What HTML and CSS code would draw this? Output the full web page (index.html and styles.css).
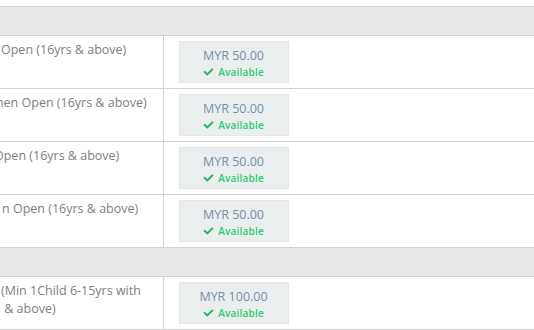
FILE: index.html
```html
<!DOCTYPE html>
<html lang="en">
<head>
    <meta charset="UTF-8">
    <meta name="viewport" content="width=device-width, initial-scale=1.0">
    <title>Tickets</title>
    <link rel="stylesheet" href="styles.css">
</head>
<body>
    <table class="tickets">
        <colgroup>
            <col class="col-name">
            <col class="col-price">
        </colgroup>
        <tr class="group">
            <td colspan="2"></td>
        </tr>
        <tr>
            <td class="name"><span class="shift-a">Open (16yrs &amp; above)</span></td>
            <td class="price">
                <div class="price-box">
                    <div class="amount">MYR 50.00</div>
                    <div class="status"><svg class="tick" viewBox="0 0 512 512"><path d="M173.9 439.4l-166.4-166.4c-10-10-10-26.2 0-36.2l36.2-36.2c10-10 26.2-10 36.2 0L192 312.7 432.1 72.6c10-10 26.2-10 36.2 0l36.2 36.2c10 10 10 26.2 0 36.2l-294.4 294.4c-10 10-26.2 10-36.2 0z"/></svg>Available</div>
                </div>
            </td>
        </tr>
        <tr>
            <td class="name"><span class="shift-b">men Open (16yrs &amp; above)</span></td>
            <td class="price">
                <div class="price-box">
                    <div class="amount">MYR 50.00</div>
                    <div class="status"><svg class="tick" viewBox="0 0 512 512"><path d="M173.9 439.4l-166.4-166.4c-10-10-10-26.2 0-36.2l36.2-36.2c10-10 26.2-10 36.2 0L192 312.7 432.1 72.6c10-10 26.2-10 36.2 0l36.2 36.2c10 10 10 26.2 0 36.2l-294.4 294.4c-10 10-26.2 10-36.2 0z"/></svg>Available</div>
                </div>
            </td>
        </tr>
        <tr>
            <td class="name"><span class="shift-c">Open (16yrs &amp; above)</span></td>
            <td class="price">
                <div class="price-box">
                    <div class="amount">MYR 50.00</div>
                    <div class="status"><svg class="tick" viewBox="0 0 512 512"><path d="M173.9 439.4l-166.4-166.4c-10-10-10-26.2 0-36.2l36.2-36.2c10-10 26.2-10 36.2 0L192 312.7 432.1 72.6c10-10 26.2-10 36.2 0l36.2 36.2c10 10 10 26.2 0 36.2l-294.4 294.4c-10 10-26.2 10-36.2 0z"/></svg>Available</div>
                </div>
            </td>
        </tr>
        <tr>
            <td class="name"><span class="shift-d">n Open (16yrs &amp; above)</span></td>
            <td class="price">
                <div class="price-box">
                    <div class="amount">MYR 50.00</div>
                    <div class="status"><svg class="tick" viewBox="0 0 512 512"><path d="M173.9 439.4l-166.4-166.4c-10-10-10-26.2 0-36.2l36.2-36.2c10-10 26.2-10 36.2 0L192 312.7 432.1 72.6c10-10 26.2-10 36.2 0l36.2 36.2c10 10 10 26.2 0 36.2l-294.4 294.4c-10 10-26.2 10-36.2 0z"/></svg>Available</div>
                </div>
            </td>
        </tr>
        <tr class="group">
            <td colspan="2"></td>
        </tr>
        <tr>
            <td class="name"><span class="shift-a">(Min 1Child 6-15yrs with<br>&nbsp;&amp; above)</span></td>
            <td class="price">
                <div class="price-box">
                    <div class="amount">MYR 100.00</div>
                    <div class="status"><svg class="tick" viewBox="0 0 512 512"><path d="M173.9 439.4l-166.4-166.4c-10-10-10-26.2 0-36.2l36.2-36.2c10-10 26.2-10 36.2 0L192 312.7 432.1 72.6c10-10 26.2-10 36.2 0l36.2 36.2c10 10 10 26.2 0 36.2l-294.4 294.4c-10 10-26.2 10-36.2 0z"/></svg>Available</div>
                </div>
            </td>
        </tr>
    </table>
</body>
</html>
```

FILE: styles.css
```css
body {
    margin: 0;
    overflow: hidden;
    background: #fff;
    font-family: "Open Sans", "Liberation Sans", sans-serif;
}

.tickets {
    margin-top: 6px;
    width: 620px;
    border-collapse: collapse;
    table-layout: fixed;
}

.col-name {
    width: 163px;
}

.tickets td {
    padding: 0;
    border-top: 1px solid #d2d2d2;
    border-bottom: 1px solid #d2d2d2;
    vertical-align: top;
}

.group td {
    height: 28px;
    background: #e8e8e8;
}

.tickets .name {
    border-right: 1px solid #d2d2d2;
    padding-top: 5px;
    font-size: 12.5px;
    line-height: 18px;
    color: #808080;
    white-space: nowrap;
    overflow: hidden;
}

.name span {
    display: inline-block;
}

.shift-a { margin-left: 1px; }
.shift-b { margin-left: -8px; }
.shift-c { margin-left: -6px; }
.shift-d { margin-left: 2px; }

.tickets .price {
    padding: 5px 0 5px 15px;
}

.price-box {
    width: 108px;
    height: 35px;
    padding-top: 5px;
    background: #ebeeef;
    border: 1px solid #e3e7e8;
    text-align: center;
}

.amount {
    font-size: 12.5px;
    line-height: 18px;
    color: #7890a8;
}

.status {
    font-size: 10px;
    line-height: 14px;
    font-weight: 600;
    color: #2ecc71;
    letter-spacing: 0.2px;
}

.tick {
    width: 11px;
    height: 10px;
    margin-right: 4px;
    vertical-align: -1px;
    fill: #27b561;
}
```
